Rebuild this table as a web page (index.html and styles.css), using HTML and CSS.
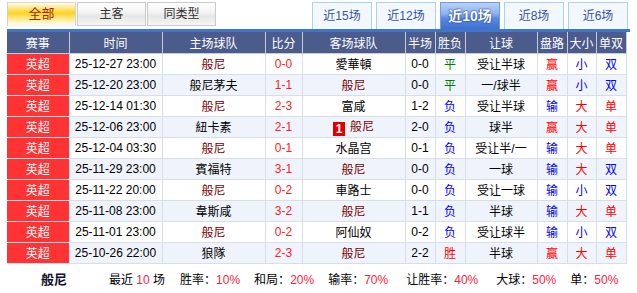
FILE: index.html
```html
<!DOCTYPE html>
<html>
<head>
<meta charset="utf-8">
<link rel="stylesheet" href="styles.css">
</head>
<body>
<div class="wrap">
  <div class="tabs">
    <div class="ltabs">
      <div class="ltab on">全部</div>
      <div class="ltab">主客</div>
      <div class="ltab">同类型</div>
    </div>
    <div class="rtabs">
      <div class="rtab">近15场</div>
      <div class="rtab">近12场</div>
      <div class="rtab on">近10场</div>
      <div class="rtab">近8场</div>
      <div class="rtab">近6场</div>
    </div>
  </div>
  <div class="bar"></div>
  <table class="grid">
    <colgroup>
      <col style="width:62px"><col style="width:93px"><col style="width:103px"><col style="width:37px"><col style="width:103px"><col style="width:30px"><col style="width:30px"><col style="width:72px"><col style="width:30px"><col style="width:29px"><col style="width:30px">
    </colgroup>
    <thead>
      <tr><th>赛事</th><th>时间</th><th>主场球队</th><th>比分</th><th>客场球队</th><th>半场</th><th>胜负</th><th>让球</th><th>盘路</th><th>大小</th><th>单双</th></tr>
    </thead>
    <tbody>
      <tr><td class="lg">英超</td><td>25-12-27 23:00</td><td class="me">般尼</td><td class="sc">0-0</td><td>愛華頓</td><td>0-0</td><td class="g">平</td><td>受让半球</td><td class="r">赢</td><td class="b">小</td><td class="b">双</td></tr>
      <tr><td class="lg">英超</td><td>25-12-20 23:00</td><td>般尼茅夫</td><td class="sc">1-1</td><td class="me">般尼</td><td>0-0</td><td class="g">平</td><td>一/球半</td><td class="r">赢</td><td class="b">小</td><td class="b">双</td></tr>
      <tr><td class="lg">英超</td><td>25-12-14 01:30</td><td class="me">般尼</td><td class="sc">2-3</td><td>富咸</td><td>1-2</td><td class="b">负</td><td>受让半球</td><td class="b">输</td><td class="r">大</td><td class="r">单</td></tr>
      <tr><td class="lg">英超</td><td>25-12-06 23:00</td><td>紐卡素</td><td class="sc">2-1</td><td class="me"><span class="card">1</span>般尼</td><td>2-0</td><td class="b">负</td><td>球半</td><td class="r">赢</td><td class="r">大</td><td class="r">单</td></tr>
      <tr><td class="lg">英超</td><td>25-12-04 03:30</td><td class="me">般尼</td><td class="sc">0-1</td><td>水晶宫</td><td>0-1</td><td class="b">负</td><td>受让半/一</td><td class="b">输</td><td class="r">大</td><td class="r">单</td></tr>
      <tr><td class="lg">英超</td><td>25-11-29 23:00</td><td>賓福特</td><td class="sc">3-1</td><td class="me">般尼</td><td>0-0</td><td class="b">负</td><td>一球</td><td class="b">输</td><td class="r">大</td><td class="b">双</td></tr>
      <tr><td class="lg">英超</td><td>25-11-22 20:00</td><td class="me">般尼</td><td class="sc">0-2</td><td>車路士</td><td>0-0</td><td class="b">负</td><td>受让一球</td><td class="b">输</td><td class="b">小</td><td class="b">双</td></tr>
      <tr><td class="lg">英超</td><td>25-11-08 23:00</td><td>韋斯咸</td><td class="sc">3-2</td><td class="me">般尼</td><td>1-1</td><td class="b">负</td><td>半球</td><td class="b">输</td><td class="r">大</td><td class="r">单</td></tr>
      <tr><td class="lg">英超</td><td>25-11-01 23:00</td><td class="me">般尼</td><td class="sc">0-2</td><td>阿仙奴</td><td>0-2</td><td class="b">负</td><td>受让球半</td><td class="b">输</td><td class="b">小</td><td class="b">双</td></tr>
      <tr><td class="lg">英超</td><td>25-10-26 22:00</td><td>狼隊</td><td class="sc">2-3</td><td class="me">般尼</td><td>2-2</td><td class="r">胜</td><td>半球</td><td class="r">赢</td><td class="r">大</td><td class="r">单</td></tr>
    </tbody>
  </table>
  <div class="foot">
    <span class="team">般尼</span>
    <span class="f1">最近 <em>10</em> 场</span>
    <span class="f2">胜率：<em>10%</em></span>
    <span class="f3">和局：<em>20%</em></span>
    <span class="f4">输率：<em>70%</em></span>
    <span class="f5">让胜率：<em>40%</em></span>
    <span class="f6">大球：<em>50%</em></span>
    <span class="f7">单：<em>50%</em></span>
  </div>
</div>
</body>
</html>
```
FILE: styles.css
```css
* { box-sizing: border-box; }
body {
  margin: 0;
  background: #fff;
  font-family: "Liberation Sans", Arial, "Noto Sans CJK SC", sans-serif;
  font-size: 12px;
  color: #000;
}
.wrap {
  padding: 2px 0 0 7px;
  width: 631px;
}
.tabs {
  display: flex;
  align-items: flex-start;
  height: 27px;
}
.ltabs {
  display: flex;
  gap: 1px;
}
.ltab {
  width: 69px;
  height: 24px;
  line-height: 22px;
  text-align: center;
  font-size: 12px;
  color: #333;
  border: 1px solid #c9c9c9;
  background: linear-gradient(#ffffff 0%, #f4f4f4 40%, #e6e6e6 60%, #f6f6f6 100%);
}
.ltab.on {
  width: 69px;
  border-color: #e6e6e6 #d0d0d0 #f2f2f2 #d0d0d0;
  color: #a02800;
  font-size: 13px;
  background: linear-gradient(#fffbe6 0%, #ffe680 25%, #ffd21e 45%, #ffe88a 70%, #fffdf2 100%);
}
.ltab.on { border-left-color: #cfcfcf; border-top-color: #d8d8d8; }
.rtabs {
  display: flex;
  gap: 4px;
  margin-left: 96px;
}
.rtab {
  width: 60px;
  height: 27px;
  line-height: 26px;
  text-align: center;
  font-size: 12px;
  color: #3555a5;
  background: #f3f8fe;
  border: 1px solid #a9d4ee;
  border-bottom: none;
}
.rtab.on {
  color: #fff;
  font-weight: bold;
  font-size: 14px;
  border: 1px solid #6f9ae2;
  border-bottom: none;
  background: linear-gradient(#b9d2fa 0%, #8fb3f2 40%, #5a88e0 60%, #3f6fd2 100%);
  text-shadow: 0 0 2px #1a3c90, 0 0 1px #1a3c90;
}
.bar {
  height: 3px;
  width: 623px;
  background: #3f76c6;
}
.grid {
  border-collapse: collapse;
  table-layout: fixed;
  width: 619px;
}
.grid th {
  height: 21px;
  padding: 0;
  background: #4b5b8b;
  color: #fff;
  font-weight: normal;
  font-size: 12px;
  border: 1px solid #c6ccd8;
  border-top: none;
}
.grid th:first-child { border-left: none; }
.grid td {
  height: 21px;
  padding: 0;
  text-align: center;
  white-space: nowrap;
  border: 1px solid #d7dee8;
}
.grid tbody tr:nth-child(even) td { background: #eff4fc; }
.grid td.lg, .grid tbody tr:nth-child(even) td.lg {
  background: #ff3333;
  color: #fff;
  border-left: none;
}
.grid td.me { color: #7a0000; }
.grid td.sc { color: #ff2020; }
.grid td.g { color: #008000; }
.grid td.b { color: #0000ff; }
.grid td.r { color: #ff0000; }
.card {
  display: inline-block;
  width: 12px;
  height: 14px;
  line-height: 14px;
  background: #e00000;
  color: #fff;
  font-weight: bold;
  margin-right: 5px;
  vertical-align: -2px;
}
.foot {
  display: flex;
  align-items: center;
  height: 29px;
  white-space: nowrap;
}
.foot em {
  font-style: normal;
  color: #ff2040;
}
.foot .team {
  font-weight: bold;
  font-size: 13px;
  color: #111133;
  margin-left: 34px;
}
.f1 { margin-left: 42px; }
.f2 { margin-left: 15px; }
.f3 { margin-left: 14px; }
.f4 { margin-left: 14px; }
.f5 { margin-left: 18px; }
.f6 { margin-left: 18px; }
.f7 { margin-left: 14px; }
```
